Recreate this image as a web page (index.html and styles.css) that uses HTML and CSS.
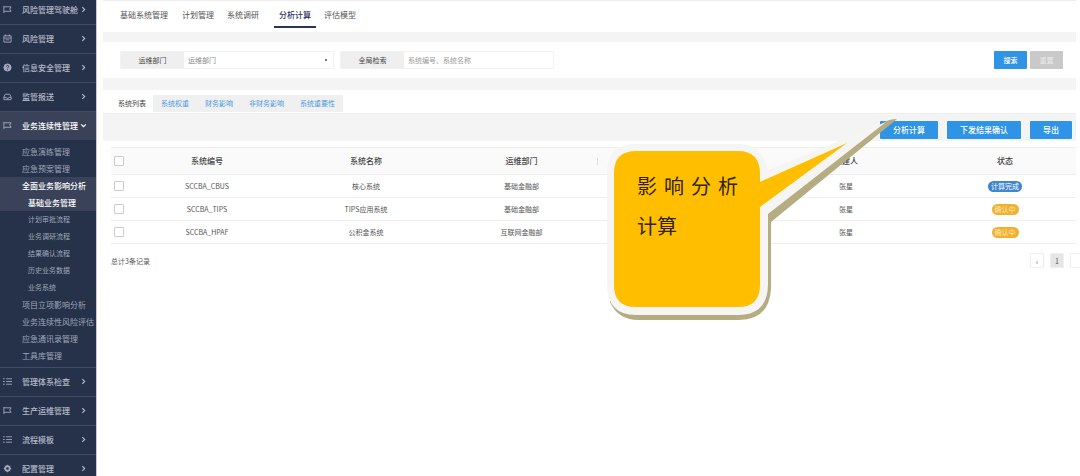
FILE: index.html
```html
<!DOCTYPE html>
<html lang="zh-CN">
<head>
<meta charset="utf-8">
<title>分析计算</title>
<link rel="stylesheet" href="styles.css">
</head>
<body>
<svg class="defs" aria-hidden="true">
  <symbol id="flag" viewBox="0 0 10 10"><path d="M1 1v8M1 2h8L7.500 4.500 9 7H1"/></symbol>
  <symbol id="cal" viewBox="0 0 10 10"><path d="M1 2h8v7H1zM1 4.500h8M3 .5v2M7 .5v2M3 6.500h4"/></symbol>
  <symbol id="help" viewBox="0 0 10 10"><circle cx="5" cy="5" r="4" fill="currentColor"/><path d="M3.700 4c0-1.800 2.700-1.600 2.600 0 0 .9-1.300 1-1.300 2M5 7v1" stroke="#26314a"/></symbol>
  <symbol id="tray" viewBox="0 0 10 10"><path d="M1 8.500V5.500l1.500-3h5l1.500 3v3zM1 6h2.500l.5 1h2l.5-1H9"/></symbol>
  <symbol id="list" viewBox="0 0 10 10"><path d="M0 2h2M3.500 2H10M0 5h2M3.500 5H10M0 8h2M3.500 8H10"/></symbol>
  <symbol id="gear" viewBox="0 0 10 10"><circle cx="5" cy="5" r="2.500" stroke-width="2"/><path d="M5 .8v1.400M5 7.800v1.400M.8 5h1.400M7.800 5h1.400M2 2l1 1M7 7l1 1M8 2L7 3M3 7L2 8"/></symbol>
  <symbol id="arrow" viewBox="0 0 6 6"><path d="M2 1l2 2-2 2"/></symbol>
  <symbol id="down" viewBox="0 0 6 6"><path d="M1 2l2 2 2-2"/></symbol>
</svg>
<div class="app">
  <nav class="sidebar">
    <ul class="menu">
      <li><a class="item" href="#"><svg class="icon"><use href="#flag"/></svg><span>风险管理驾驶舱</span><svg class="chev"><use href="#arrow"/></svg></a></li>
      <li><a class="item" href="#"><svg class="icon"><use href="#cal"/></svg><span>风险管理</span><svg class="chev"><use href="#arrow"/></svg></a></li>
      <li><a class="item" href="#"><svg class="icon"><use href="#help"/></svg><span>信息安全管理</span><svg class="chev"><use href="#arrow"/></svg></a></li>
      <li><a class="item" href="#"><svg class="icon"><use href="#tray"/></svg><span>监管报送</span><svg class="chev"><use href="#arrow"/></svg></a></li>
      <li>
        <a class="item open" href="#"><svg class="icon"><use href="#flag"/></svg><span>业务连续性管理</span><svg class="chev"><use href="#down"/></svg></a>
        <ul class="submenu">
          <li><a href="#">应急演练管理</a></li>
          <li><a href="#">应急预案管理</a></li>
          <li><a class="active" href="#">全面业务影响分析</a>
            <ul class="leaf">
              <li><a class="active" href="#">基础业务管理</a></li>
              <li><a href="#">计划审批流程</a></li>
              <li><a href="#">业务调研流程</a></li>
              <li><a href="#">结果确认流程</a></li>
              <li><a href="#">历史业务数据</a></li>
              <li><a href="#">业务系统</a></li>
            </ul>
          </li>
          <li><a href="#">项目立项影响分析</a></li>
          <li><a href="#">业务连续性风险评估</a></li>
          <li><a href="#">应急通讯录管理</a></li>
          <li><a href="#">工具库管理</a></li>
        </ul>
      </li>
      <li><a class="item" href="#"><svg class="icon"><use href="#list"/></svg><span>管理体系检查</span><svg class="chev"><use href="#arrow"/></svg></a></li>
      <li><a class="item" href="#"><svg class="icon"><use href="#flag"/></svg><span>生产运维管理</span><svg class="chev"><use href="#arrow"/></svg></a></li>
      <li><a class="item" href="#"><svg class="icon"><use href="#list"/></svg><span>流程模板</span><svg class="chev"><use href="#arrow"/></svg></a></li>
      <li><a class="item" href="#"><svg class="icon"><use href="#gear"/></svg><span>配置管理</span><svg class="chev"><use href="#arrow"/></svg></a></li>
    </ul>
  </nav>
  <main class="main">
    <nav class="topnav">
      <a href="#">基础系统管理</a><a href="#">计划管理</a><a href="#">系统调研</a><a class="active" href="#">分析计算</a><a href="#">评估模型</a>
    </nav>
    <form class="search">
      <div class="field">
        <label for="dept">运维部门</label>
        <select id="dept"><option>运维部门</option></select>
      </div>
      <div class="field">
        <label for="key">全局检索</label>
        <input id="key" type="text" placeholder="系统编号、系统名称">
      </div>
      <div class="search-actions">
        <button class="primary" type="button">搜索</button>
        <button class="reset" type="button">重置</button>
      </div>
    </form>
    <section class="results">
      <nav class="tabs">
        <a class="active" href="#">系统列表</a><a href="#">系统权重</a><a href="#">财务影响</a><a href="#">非财务影响</a><a href="#">系统重要性</a>
      </nav>
      <div class="toolbar">
        <button class="primary" type="button">分析计算</button>
        <button class="primary" type="button">下发结果确认</button>
        <button class="primary" type="button">导出</button>
      </div>
      <div class="table-wrap">
        <table>
          <colgroup><col class="c-check"><col class="c-code"><col class="c-name"><col class="c-dept"><col class="c-mid"><col class="c-user"><col></colgroup>
          <thead>
            <tr><th><input type="checkbox" aria-label="全选"></th><th>系统编号</th><th>系统名称</th><th class="sortable">运维部门</th><th></th><th>创建人</th><th class="state">状态</th></tr>
          </thead>
          <tbody>
            <tr><td><input type="checkbox" aria-label="SCCBA_CBUS"></td><td>SCCBA_CBUS</td><td>核心系统</td><td>基础金融部</td><td></td><td>张星</td><td class="state"><span class="badge done">计算完成</span></td></tr>
            <tr><td><input type="checkbox" aria-label="SCCBA_TIPS"></td><td>SCCBA_TIPS</td><td>TIPS应用系统</td><td>基础金融部</td><td></td><td>张星</td><td class="state"><span class="badge wait">确认中</span></td></tr>
            <tr><td><input type="checkbox" aria-label="SCCBA_HPAF"></td><td>SCCBA_HPAF</td><td>公积金系统</td><td>互联网金融部</td><td></td><td>张星</td><td class="state"><span class="badge wait">确认中</span></td></tr>
          </tbody>
        </table>
        <footer class="foot">
          <span>总计3条记录</span>
          <div class="pager"><button type="button">‹</button><button class="current" type="button">1</button><button type="button" aria-label="下一页"></button></div>
        </footer>
      </div>
    </section>
  </main>
  <aside class="callout">
    <svg viewBox="0 0 300 212" aria-hidden="true">
      <path class="shadow" d="M33 100H140L277 13Q283 9 291 9L165 112V179Q163 210 133 210H33Q12 210 4 192z"/>
      <path class="rim" d="M30 34H132Q156 34 162 60L280 12 162 104V174Q162 205 132 205H30Q1 205 1 174V64Q1 34 30 34z"/>
      <path class="fill" d="M30 41H132Q154 41 154 64V72L241 33 154 97V175Q154 197 132 197H30Q8 197 8 175V63Q8 41 30 41z"/>
    </svg>
    <div class="callout-text"><p class="spread">影 响 分 析</p><p>计算</p></div>
  </aside>
</div>
</body>
</html>
```
FILE: styles.css
```css
* { box-sizing: border-box; }
body {
  margin: 0;
  background: #fff;
  color: #555;
  font-family: "Noto Sans CJK SC", sans-serif;
  font-size: 7px;
  line-height: 12px;
}
ul, p { margin: 0; padding: 0; list-style: none; }
a { color: inherit; text-decoration: none; }
button, input, select { font: inherit; color: inherit; margin: 0; }
button { border: 0; padding: 0; }
.defs { position: absolute; width: 0; height: 0; }
.app { position: relative; display: flex; height: 100vh; overflow: hidden; }

/* sidebar */
.sidebar {
  flex: 0 0 97px;
  overflow: hidden;
  background: #26314a;
  border-right: 1px solid #c9c5e0;
  color: #b4bac8;
  font-size: 8px;
}
.menu { margin-top: -5px; }
.item {
  display: flex;
  align-items: center;
  height: 29px;
  padding: 0 9px 1px 3px;
  border-top: 1px solid #414b62;
  white-space: nowrap;
  font-weight: 500;
}
.item span { flex: 1; }
.item.open { background: #3a4259; color: #fff; }
.icon, .chev { fill: none; stroke: currentColor; }
.icon { width: 9px; height: 9px; margin-right: 10px; color: #a2a9ba; }
.chev { width: 7px; height: 7px; }
.submenu { padding: 3px 0; color: #9fa7b8; }
.submenu a { display: block; height: 17px; padding-left: 22px; line-height: 17px; white-space: nowrap; }
.submenu .leaf a { padding-left: 28px; font-size: 7px; }
.submenu a.active, .submenu .leaf a.active { background: #3a4259; color: #fff; font-size: 8px; font-weight: 500; }

/* content */
.main { flex: 1; min-width: 0; padding: 0 4px 0 6px; overflow: hidden; }
.topnav {
  display: flex;
  gap: 3px;
  height: 32px;
  padding: 2px 0 4px 12px;
  border-top: 1px solid #eee;
  font-size: 8px;
}
.topnav a { padding: 0 5px; line-height: 23px; border-bottom: 2px solid transparent; }
.topnav a:first-child { margin-right: 1px; }
.topnav a.active { margin-left: 7px; color: #29345c; font-weight: 500; border-bottom-color: #29345c; }
.search {
  display: flex;
  align-items: center;
  gap: 6px;
  height: 58px;
  padding: 0 13px 0 17px;
  border: solid #f4f4f4;
  border-width: 10px 0 12px;
}
.field { display: flex; height: 18px; width: 214px; border: 1px solid #f2f2f2; }
.field label { flex: 0 0 63px; background: #efefef; text-align: center; line-height: 17px; color: #444; }
.field select, .field input { flex: 1; min-width: 0; border: 0; background: #fff; color: #888; padding: 0 4px; outline: 0; }
.field select {
  appearance: none;
  background: linear-gradient(#777, #777) no-repeat right 6px center / 2px 2px;
}
.field input::placeholder { color: #999; opacity: 1; }
.search-actions { display: flex; gap: 3px; margin-left: auto; }
.search-actions button { width: 33px; height: 18px; border-radius: 1px; }
button.primary { background: #2f93e6; color: #fff; font-weight: 500; }
button.reset { background: #c9c9c9; color: #eee; }

.tabs { display: flex; height: 24px; padding: 5px 0 1px 8px; border-bottom: 1px solid #eee; }
.tabs a { padding: 0 8px; background: #f1f0f1; color: #4a9be0; line-height: 17px; }
.tabs a.active { background: #fff; color: #444; padding: 0 7px; }
.toolbar {
  display: flex;
  justify-content: flex-end;
  align-items: center;
  gap: 9px;
  height: 27px;
  padding: 5px 4px 1px 0;
  background: #f4f4f4;
  font-size: 8px;
}
.toolbar button { height: 18px; padding: 0 13px; border-radius: 1px; }
.table-wrap { padding: 6px 0 0 8px; }
table { width: 100%; table-layout: fixed; border-collapse: collapse; text-align: center; }
.c-check { width: 16px; }
.c-code { width: 160px; }
.c-name { width: 158px; }
.c-dept { width: 153px; }
.c-mid { width: 168px; }
.c-user { width: 160px; }
th, td { padding: 0; border-bottom: 1px solid #eee; }
th { height: 27px; background: #fafafa; border-top: 1px solid #eee; color: #444; font-size: 8px; font-weight: 500; }
th.sortable { background: #fafafa linear-gradient(#ddd, #ddd) no-repeat right center / 1px 7px; }
td { height: 23px; }
th.state, td.state { padding-left: 8px; }
td input, th input {
  appearance: none;
  display: block;
  width: 10px;
  height: 10px;
  margin: 0 auto 0 3px;
  border: 1px solid #ccc;
  border-radius: 1px;
  background: #fff;
}
.badge { display: inline-block; padding: 0 3px; border-radius: 6px; line-height: 11px; color: #fff; vertical-align: middle; }
.done { background: #3f86cf; }
.wait { background: #f3b02f; color: #ffe9b8; }
.foot { display: flex; justify-content: space-between; align-items: center; padding-top: 9px; }
.pager { display: flex; gap: 6px; margin-right: -8px; }
.pager button { width: 14px; height: 15px; border: 1px solid #f0f0f0; background: #fff; }
.pager .current { background: #e6e6e6; }

/* annotation bubble over the table */
.callout { position: absolute; left: 606px; top: 110px; width: 300px; }
.callout svg { display: block; width: 300px; height: 212px; }
.shadow { fill: #b6ac82; }
.rim { fill: #f5f5f3; }
.fill { fill: #ffbf00; }
.callout-text { position: absolute; left: 31px; top: 56px; width: 101px; color: #30240a; font-size: 20px; line-height: 40px; }
.spread { text-align-last: justify; }
```
